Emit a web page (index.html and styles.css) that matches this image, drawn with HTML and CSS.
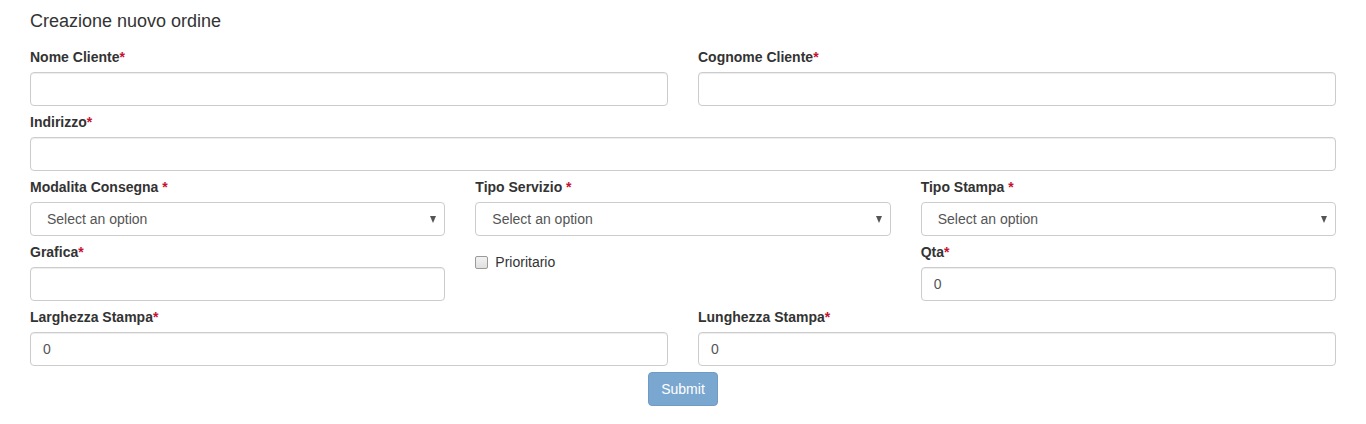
FILE: index.html
```html
<!DOCTYPE html>
<html lang="it">
<head>
<meta charset="utf-8">
<title>Creazione nuovo ordine</title>
<link rel="stylesheet" href="styles.css">
</head>
<body>
<form class="order-form">
  <h4 class="title">Creazione nuovo ordine</h4>
  <div class="row row-2">
    <div class="group">
      <label class="lbl">Nome Cliente<span class="req">*</span></label>
      <input class="ctl" type="text">
    </div>
    <div class="group">
      <label class="lbl">Cognome Cliente<span class="req">*</span></label>
      <input class="ctl" type="text">
    </div>
  </div>
  <div class="row row-1">
    <div class="group">
      <label class="lbl">Indirizzo<span class="req">*</span></label>
      <input class="ctl" type="text">
    </div>
  </div>
  <div class="row row-3">
    <div class="group">
      <label class="lbl">Modalita Consegna <span class="req">*</span></label>
      <div class="sel"><span class="sel-text">Select an option</span><span class="sel-arrow"></span></div>
    </div>
    <div class="group">
      <label class="lbl">Tipo Servizio <span class="req">*</span></label>
      <div class="sel"><span class="sel-text">Select an option</span><span class="sel-arrow"></span></div>
    </div>
    <div class="group">
      <label class="lbl">Tipo Stampa <span class="req">*</span></label>
      <div class="sel"><span class="sel-text">Select an option</span><span class="sel-arrow"></span></div>
    </div>
  </div>
  <div class="row row-3">
    <div class="group">
      <label class="lbl">Grafica<span class="req">*</span></label>
      <input class="ctl" type="text">
    </div>
    <div class="group">
      <label class="check"><span class="box"></span>Prioritario</label>
    </div>
    <div class="group">
      <label class="lbl">Qta<span class="req">*</span></label>
      <input class="ctl" type="text" value="0">
    </div>
  </div>
  <div class="row row-2">
    <div class="group">
      <label class="lbl">Larghezza Stampa<span class="req">*</span></label>
      <input class="ctl" type="text" value="0">
    </div>
    <div class="group">
      <label class="lbl">Lunghezza Stampa<span class="req">*</span></label>
      <input class="ctl" type="text" value="0">
    </div>
  </div>
  <div class="actions">
    <button class="btn" type="button">Submit</button>
  </div>
</form>
</body>
</html>
```
FILE: styles.css
```css
* { box-sizing: border-box; }
html, body { margin: 0; padding: 0; background: #fff; }
body {
  font-family: "Liberation Sans", Arial, sans-serif;
  font-size: 14px;
  line-height: 20px;
  color: #333;
}
.order-form {
  padding: 0 30px;
}
.title {
  margin: 0;
  padding-top: 11px;
  font-size: 18px;
  font-weight: 400;
  line-height: 20px;
  color: #333;
  margin-bottom: 16px;
}
.row {
  display: grid;
  column-gap: 30px;
  margin-bottom: 6px;
}
.row-1 { grid-template-columns: 1fr; }
.row-2 { grid-template-columns: 1fr 1fr; }
.row-3 { grid-template-columns: 1fr 1fr 1fr; }
.group { display: flex; flex-direction: column; min-width: 0; }
.lbl {
  display: block;
  font-weight: 700;
  line-height: 20px;
  margin-bottom: 5px;
  color: #333;
}
.req { color: #c8102e; font-weight: 700; }
.ctl {
  display: block;
  width: 100%;
  height: 34px;
  padding: 6px 12px;
  font-family: inherit;
  font-size: 14px;
  line-height: 20px;
  color: #555;
  background: #fff;
  border: 1px solid #ccc;
  border-radius: 4px;
  box-shadow: inset 0 1px 1px rgba(0,0,0,.075);
  outline: none;
}
.sel {
  display: flex;
  align-items: center;
  height: 34px;
  padding: 0 8px 0 16px;
  border: 1px solid #ccc;
  border-radius: 4px;
  background: #fff;
}
.sel-text {
  flex: 1;
  color: #555;
  line-height: 20px;
}
.sel-arrow {
  width: 0;
  height: 0;
  border-left: 3.5px solid transparent;
  border-right: 3.5px solid transparent;
  border-top: 7px solid #555;
  margin-top: 1px;
}
.check {
  display: flex;
  align-items: center;
  margin-top: 10px;
  line-height: 20px;
  color: #333;
  font-weight: 400;
}
.box {
  width: 13px;
  height: 13px;
  border: 1px solid #9a9a9a;
  border-radius: 2px;
  background: linear-gradient(#f2f2f2, #e0e0e0);
  margin-left: 0;
  margin-right: 7px;
}
.actions {
  display: flex;
  justify-content: center;
}
.btn {
  height: 34px;
  padding: 6px 12px;
  font-family: inherit;
  font-size: 14px;
  line-height: 20px;
  color: #fff;
  background: #7aa7d0;
  border: 1px solid #6f9cc6;
  border-radius: 4px;
}
```
